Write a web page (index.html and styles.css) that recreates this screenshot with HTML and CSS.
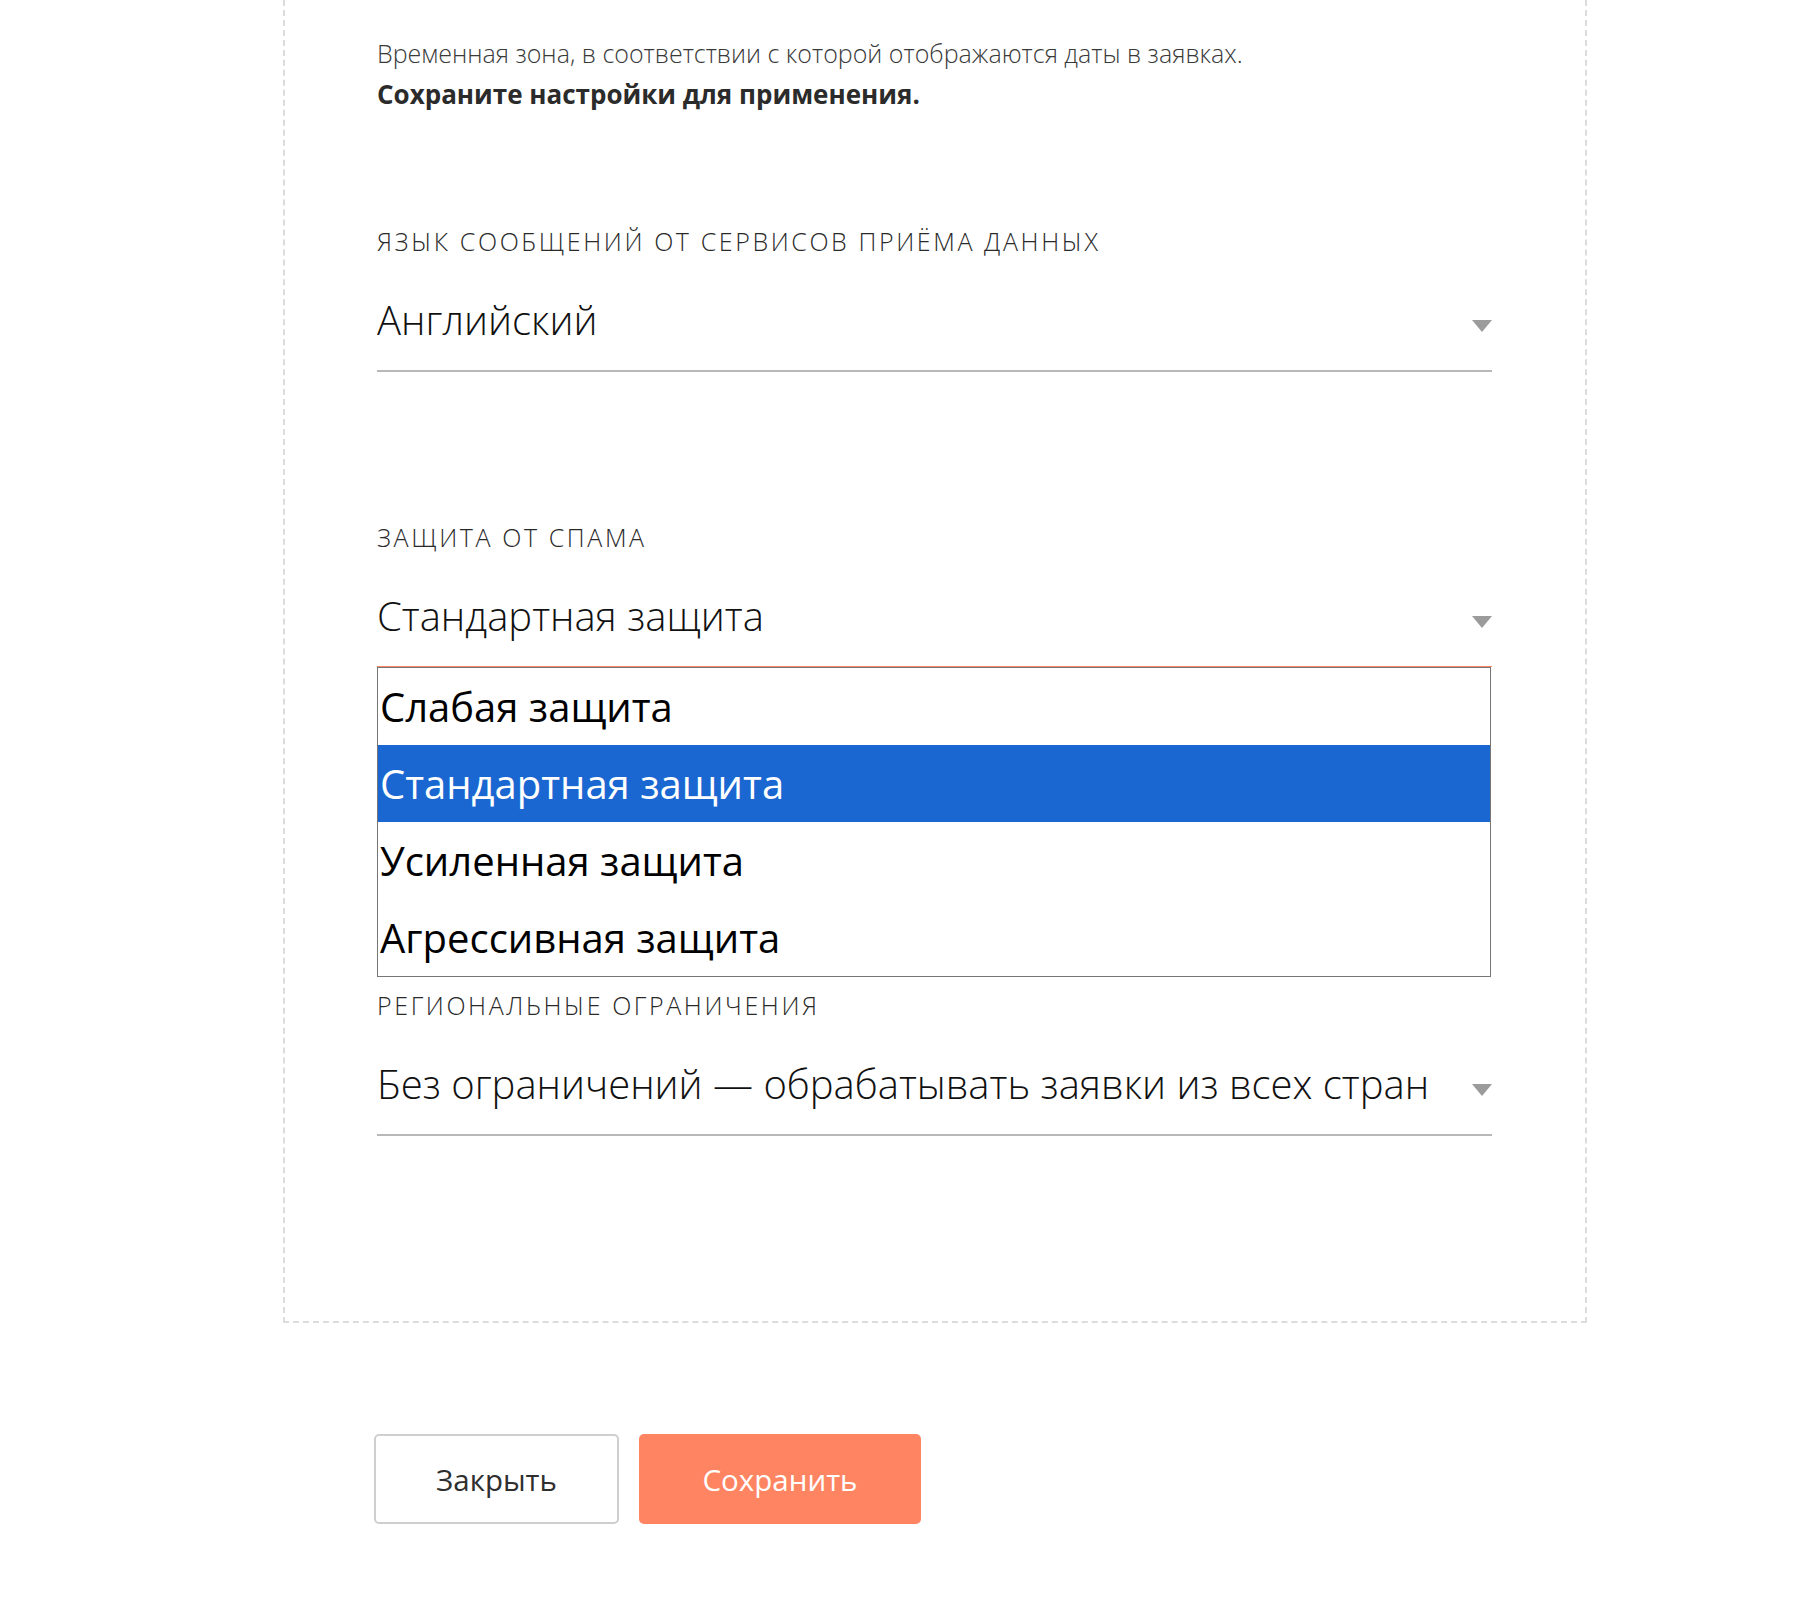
FILE: index.html
```html
<!DOCTYPE html>
<html lang="ru">
<head>
<meta charset="utf-8">
<title>Настройки</title>
<link rel="stylesheet" href="styles.css">
</head>
<body>
<div class="page">
  <section class="card">
    <p class="desc">Временная зона, в соответствии с которой отображаются даты в заявках.</p>
    <p class="desc desc-strong">Сохраните настройки для применения.</p>

    <div class="field field-first">
      <div class="label">Язык сообщений от сервисов приёма данных</div>
      <div class="select">
        <span class="value">Английский</span>
        <span class="arrow"></span>
      </div>
    </div>

    <div class="field">
      <div class="label">Защита от спама</div>
      <div class="select select-open">
        <span class="value">Стандартная защита</span>
        <span class="arrow"></span>
      </div>
      <ul class="listbox">
        <li class="option">Слабая защита</li>
        <li class="option option-selected">Стандартная защита</li>
        <li class="option">Усиленная защита</li>
        <li class="option">Агрессивная защита</li>
      </ul>
    </div>

    <div class="field field-after-list">
      <div class="label">Региональные ограничения</div>
      <div class="select">
        <span class="value">Без ограничений — обрабатывать заявки из всех стран</span>
        <span class="arrow"></span>
      </div>
    </div>
  </section>

  <div class="actions">
    <button class="btn btn-close" type="button">Закрыть</button>
    <button class="btn btn-save" type="button">Сохранить</button>
  </div>
</div>
</body>
</html>
```

FILE: styles.css
```css
html, body {
  margin: 0;
  padding: 0;
  background: #ffffff;
}

body {
  font-family: "Open Sans", "Noto Sans", "DejaVu Sans", sans-serif;
  color: #222;
}

.page {
  padding-left: 283px;
}

.card {
  box-sizing: border-box;
  width: 1304px;
  border: 2px dashed #dcdcdc;
  border-top: none;
  padding: 33px 93px 185px 92px;
}

.desc {
  margin: 0;
  font-size: 25px;
  line-height: 40px;
  font-weight: 300;
  color: #3a3a3a;
  white-space: nowrap;
}

.desc-strong {
  font-size: 26px;
  line-height: 42px;
  font-weight: 700;
  color: #2b2b2b;
}

.field {
  margin-top: 152px;
}

.field-first {
  margin-top: 113px;
}

.field-after-list {
  margin-top: 15px;
}

.label {
  font-size: 25px;
  line-height: 26px;
  font-weight: 300;
  text-transform: uppercase;
  letter-spacing: 2.6px;
  color: #2a2a2a;
  white-space: nowrap;
}

.select {
  display: flex;
  align-items: flex-start;
  margin-top: 36px;
  padding-bottom: 20px;
  border-bottom: 2px solid #b8b8b8;
}

.select-open {
  padding-bottom: 20px;
  border-bottom: 1px solid #ff8462;
}

.value {
  flex: 1;
  font-size: 40px;
  line-height: 60px;
  font-weight: 300;
  color: #111;
  white-space: nowrap;
}

.arrow {
  flex: none;
  width: 0;
  height: 0;
  margin-top: 30px;
  border-left: 10px solid transparent;
  border-right: 10px solid transparent;
  border-top: 12px solid #9b9b9b;
}

.listbox {
  list-style: none;
  margin: 0 1px 0 0;
  padding: 0;
  border: 1px solid #767676;
  background: #fff;
}

.option {
  height: 77px;
  padding-left: 2px;
  font-size: 40px;
  line-height: 77px;
  font-weight: 400;
  color: #000;
  white-space: nowrap;
}

.option-selected {
  background: #1a67d2;
  color: #fff;
}

.actions {
  display: flex;
  gap: 20px;
  margin-top: 111px;
  padding-left: 91px;
}

.btn {
  box-sizing: border-box;
  height: 90px;
  border-radius: 5px;
  font-family: "Open Sans", "Noto Sans", "DejaVu Sans", sans-serif;
  font-size: 29.5px;
  font-weight: 400;
  display: flex;
  align-items: center;
  justify-content: center;
  padding: 0;
  cursor: pointer;
}

.btn-close {
  width: 245px;
  background: #fff;
  border: 2px solid #cfcfcf;
  color: #2f2f2f;
}

.btn-save {
  width: 282px;
  background: #ff8562;
  border: none;
  color: #fff;
}
```
